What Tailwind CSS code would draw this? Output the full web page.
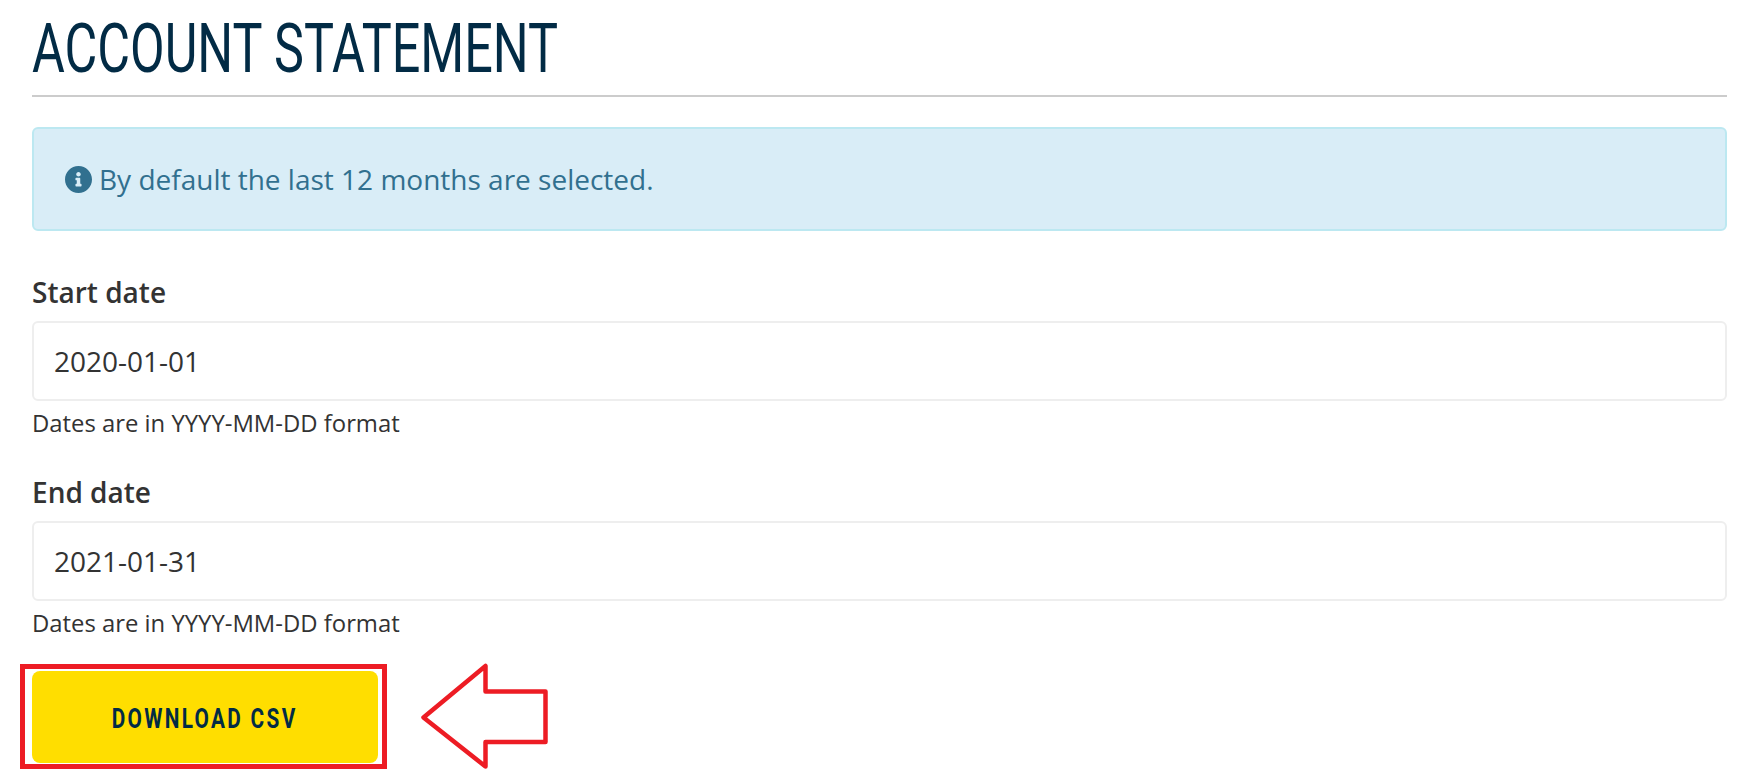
<!DOCTYPE html>
<html>
<head>
<meta charset="utf-8">
<script src="https://cdn.jsdelivr.net/npm/@tailwindcss/browser@4"></script>
</head>
<body class="bg-white">
<div class="relative w-[1754px] h-[781px] overflow-hidden pl-[32px] pr-[27px] font-['Open_Sans',sans-serif] text-[#333]">
  <div class="h-[97px] border-b-2 border-[#ccc] flex items-start">
    <h1 class="mt-[11px] origin-left scale-x-[0.74] whitespace-nowrap font-['Roboto',sans-serif] font-normal text-[68px] leading-[77px] text-[#022b45]">ACCOUNT STATEMENT</h1>
  </div>
  <div class="mt-[30px] h-[104px] rounded-[6px] border-2 border-[#bce8f1] bg-[#d9edf7] pl-[31px] flex items-center gap-[7px] text-[#31708f] text-[28px]">
    <svg class="w-[27px] h-[27px] shrink-0" viewBox="8 8 496 496" fill="#31708f"><path d="M256 8C119.043 8 8 119.083 8 256c0 136.997 111.043 248 248 248s248-111.003 248-248C504 119.083 392.957 8 256 8zm0 110c23.196 0 42 18.804 42 42s-18.804 42-42 42-42-18.804-42-42 18.804-42 42-42zm56 254c0 6.627-5.373 12-12 12h-88c-6.627 0-12-5.373-12-12v-24c0-6.627 5.373-12 12-12h12v-64h-12c-6.627 0-12-5.373-12-12v-24c0-6.627 5.373-12 12-12h64c6.627 0 12 5.373 12 12v100h12c6.627 0 12 5.373 12 12v24z"/></svg>
    <span>By default the last 12 months are selected.</span>
  </div>
  <label class="block mt-[43px] h-[47px] text-[28px] font-semibold leading-[36px]">Start date</label>
  <div class="h-[80px] rounded-[6px] border-2 border-[#eee] bg-white pl-[20px] flex items-center text-[28px]">2020-01-01</div>
  <p class="mt-[7px] h-[29px] text-[23.85px] leading-[30px]">Dates are in YYYY-MM-DD format</p>
  <label class="block mt-[37px] h-[47px] text-[28px] font-semibold leading-[36px]">End date</label>
  <div class="h-[80px] rounded-[6px] border-2 border-[#eee] bg-white pl-[20px] flex items-center text-[28px]">2021-01-31</div>
  <p class="mt-[7px] h-[29px] text-[23.85px] leading-[30px]">Dates are in YYYY-MM-DD format</p>
  <button class="mt-[34px] w-[346px] h-[92px] pt-[4px] rounded-[8px] bg-[#ffde00] flex items-center justify-center text-[#022b45] font-['Roboto',sans-serif] font-bold text-[27px] tracking-[3px]"><span class="scale-x-[0.77] whitespace-nowrap">DOWNLOAD CSV</span></button>
  <div class="absolute left-[20px] top-[664px] w-[367px] h-[105px] border-[5px] border-[#ed1c24]"></div>
  <svg class="absolute left-[420px] top-[662px]" width="130" height="108" viewBox="420 662 130 108" fill="none" stroke="#ed1c24" stroke-width="4.500" stroke-linejoin="round"><path d="M423.5 717.500 L485.500 666 V691.500 H545.500 V742 H485.500 V766.500 Z"/></svg>
</div>
</body>
</html>
